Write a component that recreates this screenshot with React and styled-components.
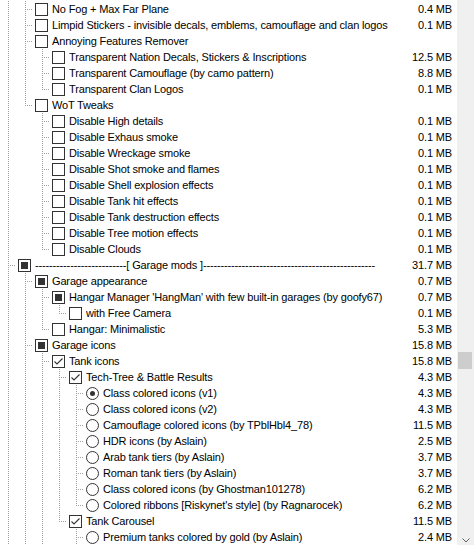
import styled, { createGlobalStyle } from 'styled-components';

const GlobalStyle = createGlobalStyle`
  html, body {
    margin: 0;
    padding: 0;
    background: #ffffff;
  }
`;

const Window = styled.div`
  display: flex;
  width: 474px;
  height: 545px;
  overflow: hidden;
  background: #ffffff;
  font-family: 'Liberation Sans', Arial, sans-serif;
  font-size: 11px;
  letter-spacing: -0.15px;
  color: #000000;
`;

const Tree = styled.div`
  flex: 1;
  min-width: 0;
  padding-top: 1px;
`;

const Row = styled.div`
  display: flex;
  align-items: flex-start;
  height: 16px;
  padding-left: 1px;
  line-height: 16px;
  white-space: nowrap;
`;

const dots = '#a0a0a0';
const vLine = `repeating-linear-gradient(to bottom, ${dots} 0 1px, transparent 1px 2px)`;
const hLine = `repeating-linear-gradient(to right, ${dots} 0 1px, transparent 1px 2px)`;

// one 17px column of tree guide lines: pipe │, tee ├, elbow └, blank
const Guide = styled.span`
  flex: none;
  width: 17px;
  height: 16px;
  background-repeat: no-repeat;
  background-image: ${p =>
    p.$kind === 'pipe' ? vLine :
    p.$kind === 'tee' || p.$kind === 'elbow' ? `${vLine}, ${hLine}` : 'none'};
  background-size: ${p => (p.$kind === 'elbow' ? '1px 9px, 8px 1px' : '1px 16px, 8px 1px')};
  background-position: 7px 0, 7px 8px;
`;

const Box = styled.span`
  flex: none;
  box-sizing: border-box;
  width: 13px;
  height: 13px;
  margin-top: 2px;
  margin-right: 4px;
  border: 1px solid #333333;
  border-radius: ${p => (p.$round ? '50%' : '0')};
  background: #ffffff;
  display: flex;
  align-items: center;
  justify-content: center;
`;

const Fill = styled.span`
  width: ${p => (p.$round ? '5px' : '7px')};
  height: ${p => (p.$round ? '5px' : '7px')};
  border-radius: ${p => (p.$round ? '50%' : '0')};
  background: #333333;
`;

const Label = styled.span`
  flex: 1;
  min-width: 0;
  overflow: hidden;
`;

const Size = styled.span`
  flex: none;
  padding-right: 5px;
  text-align: right;
`;

const ScrollBar = styled.div`
  flex: none;
  width: 17px;
  display: flex;
  flex-direction: column;
  background: #f0f0f0;
`;

const Thumb = styled.div`
  height: 17px;
  margin: 352px 2px 0 1px;
  background: #cdcdcd;
`;

const Track = styled.div`
  flex: 1;
`;

const ArrowButton = styled.div`
  height: 17px;
  margin-bottom: -4px;
  display: flex;
  align-items: center;
  justify-content: center;
`;

const items = [
  { level: 1, label: 'No Fog + Max Far Plane', size: '0.4 MB' },
  { level: 1, label: 'Limpid Stickers - invisible decals, emblems, camouflage and clan logos', size: '0.1 MB' },
  { level: 1, label: 'Annoying Features Remover' },
  { level: 2, label: 'Transparent Nation Decals, Stickers & Inscriptions', size: '12.5 MB' },
  { level: 2, label: 'Transparent Camouflage (by camo pattern)', size: '8.8 MB' },
  { level: 2, label: 'Transparent Clan Logos', size: '0.1 MB' },
  { level: 1, label: 'WoT Tweaks' },
  { level: 2, label: 'Disable High details', size: '0.1 MB' },
  { level: 2, label: 'Disable Exhaus smoke', size: '0.1 MB' },
  { level: 2, label: 'Disable Wreckage smoke', size: '0.1 MB' },
  { level: 2, label: 'Disable Shot smoke and flames', size: '0.1 MB' },
  { level: 2, label: 'Disable Shell explosion effects', size: '0.1 MB' },
  { level: 2, label: 'Disable Tank hit effects', size: '0.1 MB' },
  { level: 2, label: 'Disable Tank destruction effects', size: '0.1 MB' },
  { level: 2, label: 'Disable Tree motion effects', size: '0.1 MB' },
  { level: 2, label: 'Disable Clouds', size: '0.1 MB' },
  {
    level: 0,
    label: '--------------------------[ Garage mods ]-------------------------------------------------',
    size: '31.7 MB',
    state: 'partial',
  },
  { level: 1, label: 'Garage appearance', size: '0.7 MB', state: 'partial' },
  { level: 2, label: "Hangar Manager 'HangMan' with few built-in garages (by goofy67)", size: '0.7 MB', state: 'partial' },
  { level: 3, label: 'with Free Camera', size: '0.1 MB' },
  { level: 2, label: 'Hangar: Minimalistic', size: '5.3 MB' },
  { level: 1, label: 'Garage icons', size: '15.8 MB', state: 'partial' },
  { level: 2, label: 'Tank icons', size: '15.8 MB', state: 'on' },
  { level: 3, label: 'Tech-Tree & Battle Results', size: '4.3 MB', state: 'on' },
  { level: 4, label: 'Class colored icons (v1)', size: '4.3 MB', state: 'radioOn' },
  { level: 4, label: 'Class colored icons (v2)', size: '4.3 MB', state: 'radio' },
  { level: 4, label: 'Camouflage colored icons (by TPblHbl4_78)', size: '11.5 MB', state: 'radio' },
  { level: 4, label: 'HDR icons (by Aslain)', size: '2.5 MB', state: 'radio' },
  { level: 4, label: 'Arab tank tiers (by Aslain)', size: '3.7 MB', state: 'radio' },
  { level: 4, label: 'Roman tank tiers (by Aslain)', size: '3.7 MB', state: 'radio' },
  { level: 4, label: 'Class colored icons (by Ghostman101278)', size: '6.2 MB', state: 'radio' },
  { level: 4, label: "Colored ribbons [Riskynet's style] (by Ragnarocek)", size: '6.2 MB', state: 'radio' },
  { level: 3, label: 'Tank Carousel', size: '11.5 MB', state: 'on' },
  { level: 4, label: 'Premium tanks colored by gold (by Aslain)', size: '2.4 MB', state: 'radio' },
];

// levels whose sibling lists go on past the visible part of the list
const continuesBelow = [0, 1, 2, 4];

function hasNextSibling(index, level) {
  for (let j = index + 1; j < items.length; j++) {
    if (items[j].level === level) return true;
    if (items[j].level < level) return false;
  }
  return continuesBelow.includes(level);
}

function ancestorIndex(index, level) {
  for (let j = index - 1; j >= 0; j--) {
    if (items[j].level === level) return j;
  }
  return -1;
}

function guidesFor(index) {
  const { level } = items[index];
  const cols = [];
  for (let l = 0; l < level; l++) {
    cols.push(hasNextSibling(ancestorIndex(index, l), l) ? 'pipe' : 'blank');
  }
  cols.push(hasNextSibling(index, level) ? 'tee' : 'elbow');
  return cols;
}

function Check({ state = 'off' }) {
  const round = state === 'radio' || state === 'radioOn';
  return (
    <Box $round={round}>
      {state === 'partial' && <Fill />}
      {state === 'radioOn' && <Fill $round />}
      {state === 'on' && (
        <svg width="11" height="11" viewBox="0 0 11 11">
          <polyline points="1.5,5.5 4,8 9.5,2.5" fill="none" stroke="#333333" strokeWidth="1.1" />
        </svg>
      )}
    </Box>
  );
}

export default function App() {
  return (
    <>
      <GlobalStyle />
      <Window>
        <Tree>
          {items.map((item, i) => (
            <Row key={i}>
              {guidesFor(i).map((kind, c) => (
                <Guide key={c} $kind={kind} />
              ))}
              <Check state={item.state} />
              <Label>{item.label}</Label>
              {item.size && <Size>{item.size}</Size>}
            </Row>
          ))}
        </Tree>
        <ScrollBar>
          <Thumb />
          <Track />
          <ArrowButton>
            <svg width="8" height="5" viewBox="0 0 8 5">
              <polyline points="0.5,0.5 4,4 7.5,0.5" fill="none" stroke="#606060" strokeWidth="1" />
            </svg>
          </ArrowButton>
        </ScrollBar>
      </Window>
    </>
  );
}
